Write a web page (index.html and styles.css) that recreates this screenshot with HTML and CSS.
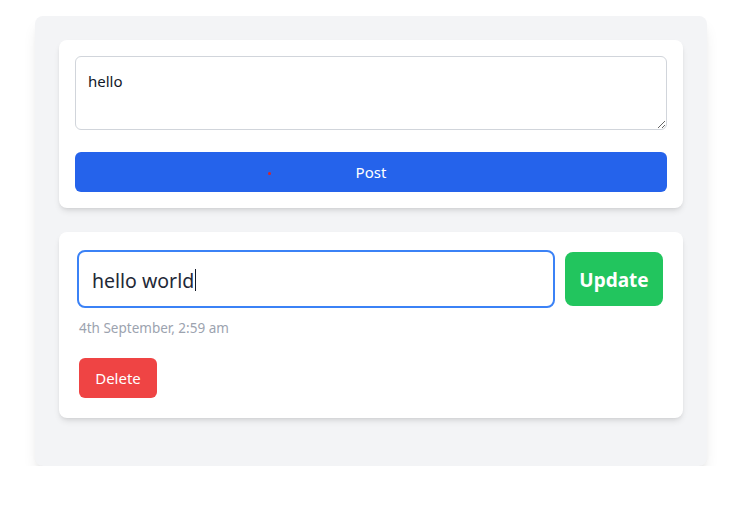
FILE: index.html
```html
<!DOCTYPE html>
<html lang="en">
<head>
<meta charset="utf-8">
<title>Posts</title>
<link rel="stylesheet" href="styles.css">
</head>
<body>
<main class="board">
  <section class="card composer">
    <textarea class="textarea">hello</textarea>
    <button class="btn btn-post"><span class="dot"></span>Post</button>
  </section>
  <section class="card post">
    <div class="edit-row">
      <div class="field"><span class="field-text">hello world</span><span class="caret"></span></div>
      <button class="btn btn-update">Update</button>
    </div>
    <p class="date">4th September, 2:59 am</p>
    <button class="btn btn-delete">Delete</button>
  </section>
</main>
</body>
</html>
```
FILE: styles.css
```css
* { box-sizing: border-box; }
body {
  margin: 0;
  background: #ffffff;
  font-family: "Segoe UI", "Noto Sans", sans-serif;
  color: #111827;
}
.board {
  width: 672px;
  margin: 16px 0 0 35px;
  padding: 24px 24px 48px;
  background: #f3f4f6;
  border-radius: 8px;
  box-shadow: 0 10px 15px -3px rgba(0,0,0,0.1), 0 4px 6px -4px rgba(0,0,0,0.1);
  display: flex;
  flex-direction: column;
  gap: 24px;
}
.card {
  background: #ffffff;
  border-radius: 8px;
  box-shadow: 0 4px 6px -1px rgba(0,0,0,0.1), 0 2px 4px -2px rgba(0,0,0,0.1);
}
.composer {
  padding: 16px;
  display: flex;
  flex-direction: column;
  gap: 22px;
}
.textarea {
  display: block;
  width: 100%;
  height: 74px;
  margin: 0;
  border: 1px solid #d1d5db;
  border-radius: 6px;
  padding: 12px 12px;
  font-family: inherit;
  font-size: 15px;
  line-height: 24px;
  color: #111827;
  outline: none;
  resize: vertical;
}
.btn {
  border: none;
  font-family: inherit;
  color: #ffffff;
  cursor: pointer;
}
.btn-post {
  position: relative;
  height: 40px;
  background: #2563eb;
  border-radius: 6px;
  font-size: 15px;
  padding-top: 1px;
}
.dot {
  position: absolute;
  left: 193px;
  top: 20px;
  width: 3px;
  height: 3px;
  border-radius: 50%;
  background: #dc2626;
}
.post {
  padding: 18px 20px 20px 18px;
  display: flex;
  flex-direction: column;
  align-items: flex-start;
}
.edit-row {
  width: 100%;
  display: flex;
  align-items: center;
  gap: 10px;
}
.field {
  flex: 1;
  height: 58px;
  border: 2px solid #3b82f6;
  border-radius: 8px;
  padding: 2px 13px 0;
  display: flex;
  align-items: center;
  font-size: 19.5px;
  color: #1f2937;
}
.caret {
  width: 1px;
  height: 22px;
  background: #111827;
  margin-left: 1px;
}
.btn-update {
  width: 98px;
  height: 54px;
  background: #22c55e;
  border-radius: 8px;
  font-size: 19px;
  font-weight: 700;
  padding-top: 2px;
}
.date {
  margin: 10px 0 0 2px;
  font-size: 13.5px;
  line-height: 20px;
  color: #9ca3af;
}
.btn-delete {
  margin: 20px 0 0 2px;
  width: 78px;
  height: 40px;
  background: #ef4444;
  border-radius: 6px;
  font-size: 15px;
}
```
